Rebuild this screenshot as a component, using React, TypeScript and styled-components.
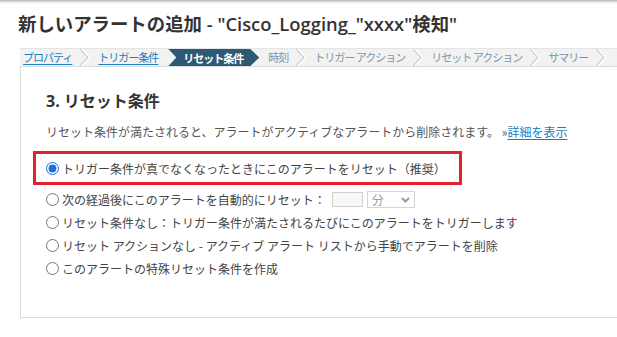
import styled, { createGlobalStyle } from "styled-components";

/* ================== GLOBAL ================== */

const GlobalStyle = createGlobalStyle`
  html, body {
    margin: 0;
    padding: 0;
    background: #fff;
    overflow: hidden;
  }
  body {
    font-family: "Noto Sans CJK JP", "Open Sans", sans-serif;
    color: #444;
  }
`;

const JP = `"Noto Sans CJK JP", sans-serif`;

/* ================== STYLES ================== */

const Page = styled.main`
  width: 617px;
  height: 337px;
  overflow: hidden;
`;

const TopShade = styled.div`
  height: 4px;
  background: linear-gradient(#b4b4b4, #e6e6e6 50%, #fff);
`;

const Title = styled.h1`
  margin: 8px 0 0 18px;
  font-family: "Open Sans", "Noto Sans CJK JP", sans-serif;
  font-size: 18.4px;
  line-height: 24px;
  font-weight: 600;
  color: #333;
  white-space: nowrap;
`;

/* ===== STEPS ===== */

const Steps = styled.nav`
  margin: 12px 0 0 20px;
  height: 17px;
  display: flex;
  align-items: center;
  padding-left: 3px;
  background: #f2f2f2;
  border-top: 1px solid #e4e4e4;
  border-bottom: 1px solid #dcdcdc;
  white-space: nowrap;
  font-family: ${JP};
  font-size: 11px;
  letter-spacing: -1px;
`;

const Step = styled.span<{ $link?: boolean }>`
  color: ${({ $link }) => ($link ? "#1b7ec2" : "#7896ab")};
  text-decoration: ${({ $link }) => ($link ? "underline" : "none")};
  text-underline-offset: 2px;
  line-height: 17px;
`;

const ActiveStep = styled.span`
  margin: 0 9px 0 10px;
  height: 17px;
  padding: 0 16px 0 15px;
  display: flex;
  align-items: center;
  background: #2c5a74;
  color: #fff;
  font-weight: 700;
  clip-path: polygon(0 0, calc(100% - 9px) 0, 100% 50%, calc(100% - 9px) 100%, 0 100%, 8px 50%);
`;

const Sep = styled.svg`
  flex: 0 0 auto;
  margin: 0 8px;
`;

/* ===== PANEL ===== */

const Panel = styled.section`
  margin-left: 20px;
  height: 251px;
  box-sizing: border-box;
  padding: 23px 0 0 25px;
  border-left: 1px solid #dcdcdc;
  border-bottom: 1px solid #dcdcdc;
`;

const Heading = styled.h2`
  margin: 0;
  font-family: "Open Sans", "Noto Sans CJK JP", sans-serif;
  font-size: 16px;
  line-height: 22px;
  font-weight: 700;
  color: #333;
`;

const Desc = styled.p`
  margin: 11px 0 0;
  font-family: ${JP};
  font-size: 12px;
  line-height: 18px;
  color: #555;
  white-space: nowrap;
`;

const MoreLink = styled.a`
  color: #1b7ec2;
  text-decoration: underline;
  text-underline-offset: 2px;
`;

const Highlight = styled.div`
  margin: 10px 0 0 -13px;
  width: 429px;
  height: 34px;
  box-sizing: border-box;
  padding-left: 10px;
  border: 3px solid #e3202b;
  display: flex;
  align-items: center;
`;

const Options = styled.div`
  margin-top: 3px;
  display: flex;
  flex-direction: column;
`;

const Option = styled.label`
  height: 23px;
  display: flex;
  align-items: center;
  font-family: ${JP};
  font-size: 12px;
  color: #444;
  white-space: nowrap;
`;

const Radio = styled.input`
  width: 13px;
  height: 13px;
  margin: 0 3px 0 0;
  accent-color: #1a6fe0;
`;

const NumBox = styled.span`
  width: 29px;
  height: 13px;
  margin-left: 6px;
  border: 1px solid #cfcfcf;
  background: #f8f8f8;
`;

const UnitSelect = styled.span`
  width: 38px;
  height: 15px;
  margin-left: 4px;
  box-sizing: content-box;
  padding: 0 4px;
  border: 1px solid #d6d6d6;
  display: flex;
  align-items: center;
  justify-content: space-between;
  color: #999;
  font-size: 12px;
  line-height: 15px;
`;

/* ================== PAGE ================== */

function Chevron() {
  return (
    <Sep width="10" height="17" viewBox="0 0 10 17">
      <polyline points="1,0 9,8.5 1,17" fill="none" stroke="#fff" strokeWidth="3" />
      <polyline points="0,0 8,8.5 0,17" fill="none" stroke="#cdcdcd" strokeWidth="1.2" />
    </Sep>
  );
}

const options = [
  "リセット条件なし：トリガー条件が満たされるたびにこのアラートをトリガーします",
  "リセット アクションなし - アクティブ アラート リストから手動でアラートを削除",
  "このアラートの特殊リセット条件を作成",
];

export default function App() {
  return (
    <Page>
      <GlobalStyle />
      <TopShade />
      <Title>新しいアラートの追加 - "Cisco_Logging_"xxxx"検知"</Title>

      <Steps>
        <Step $link>プロパティ</Step>
        <Chevron />
        <Step $link>トリガー条件</Step>
        <ActiveStep>リセット条件</ActiveStep>
        <Step>時刻</Step>
        <Chevron />
        <Step>トリガー アクション</Step>
        <Chevron />
        <Step>リセット アクション</Step>
        <Chevron />
        <Step>サマリー</Step>
        <Chevron />
      </Steps>

      <Panel>
        <Heading>3. リセット条件</Heading>
        <Desc>
          リセット条件が満たされると、アラートがアクティブなアラートから削除されます。 »
          <MoreLink>詳細を表示</MoreLink>
        </Desc>

        <Highlight>
          <Option>
            <Radio type="radio" name="reset" defaultChecked />
            トリガー条件が真でなくなったときにこのアラートをリセット（推奨）
          </Option>
        </Highlight>

        <Options>
          <Option>
            <Radio type="radio" name="reset" />
            次の経過後にこのアラートを自動的にリセット：
            <NumBox />
            <UnitSelect>
              分
              <svg width="9" height="6" viewBox="0 0 9 6">
                <polyline points="1,1 4.5,4.5 8,1" fill="none" stroke="#9a9a9a" strokeWidth="2" />
              </svg>
            </UnitSelect>
          </Option>
          {options.map((text) => (
            <Option key={text}>
              <Radio type="radio" name="reset" />
              {text}
            </Option>
          ))}
        </Options>
      </Panel>
    </Page>
  );
}
